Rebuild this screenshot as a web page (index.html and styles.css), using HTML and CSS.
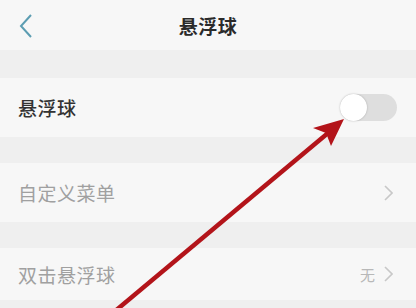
FILE: index.html
```html
<!DOCTYPE html>
<html>
<head>
<meta charset="utf-8">
<link rel="stylesheet" href="styles.css">
</head>
<body>
<div class="page">
  <header class="bar">
    <svg class="back" width="14" height="24" viewBox="0 0 14 24"><path d="M12 1 L2 12 L12 23" fill="none" stroke="#5c9db2" stroke-width="2"/></svg>
    <div class="title">悬浮球</div>
  </header>
  <div class="gap g1"></div>
  <div class="row r1">
    <span class="label dark">悬浮球</span>
    <span class="toggle"><span class="knob"></span></span>
  </div>
  <div class="gap g2"></div>
  <div class="row r2">
    <span class="label">自定义菜单</span>
    <svg class="chev" width="9" height="16" viewBox="0 0 9 16"><path d="M1 1 L8 8 L1 15" fill="none" stroke="#c8c8c8" stroke-width="1.6"/></svg>
  </div>
  <div class="gap g2"></div>
  <div class="row r3">
    <span class="label">双击悬浮球</span>
    <span class="right"><span class="val">无</span><svg class="chev" width="9" height="16" viewBox="0 0 9 16"><path d="M1 1 L8 8 L1 15" fill="none" stroke="#c8c8c8" stroke-width="1.6"/></svg></span>
  </div>
  <svg class="arrow" width="416" height="308" viewBox="0 0 416 308">
    <path d="M114 312 L334 128" stroke="#b3141a" stroke-width="4.5" fill="none"/>
    <path d="M344 119 L313 128 L326 133 L331 146 Z" fill="#b3141a"/>
  </svg>
</div>
</body>
</html>
```
FILE: styles.css
```css
html, body { margin: 0; padding: 0; }
body {
  background: #efefef;
  font-family: "Noto Sans CJK SC", "Liberation Sans", sans-serif;
  width: 416px; height: 308px; overflow: hidden;
}
.page { position: relative; width: 416px; height: 308px; }
.bar {
  height: 50px; background: #f7f7f7; display: flex; align-items: center;
  justify-content: center; position: relative;
}
.back { position: absolute; left: 19px; top: 14px; }
.title { font-size: 19px; font-weight: 700; color: #2a2a2a; letter-spacing: 0.5px; }
.gap { background: #efefef; }
.g1 { height: 28px; }
.g2 { height: 26px; }
.row {
  background: #f7f7f7; display: flex; align-items: center; justify-content: space-between;
  padding: 0 21px 0 18px;
}
.r1 { height: 59px; }
.r2 { height: 59px; }
.r3 { height: 52px; }
.label { font-size: 19px; color: #a0a0a0; letter-spacing: 0.5px; }
.label.dark { color: #333; font-weight: 500; }
.toggle {
  width: 57px; height: 27px; border-radius: 14px; background: #dedede; position: relative;
  margin-right: -2px;
}
.knob {
  position: absolute; left: 0; top: 0; width: 27px; height: 27px; border-radius: 50%;
  background: #fff; box-shadow: 0 0 2px rgba(0,0,0,0.25);
}
.chev { display: block; margin-right: 2px; }
.right { display: flex; align-items: center; gap: 9px; }
.val { font-size: 15px; color: #b8b8b8; }
.arrow { position: absolute; left: 0; top: 0; }
```
